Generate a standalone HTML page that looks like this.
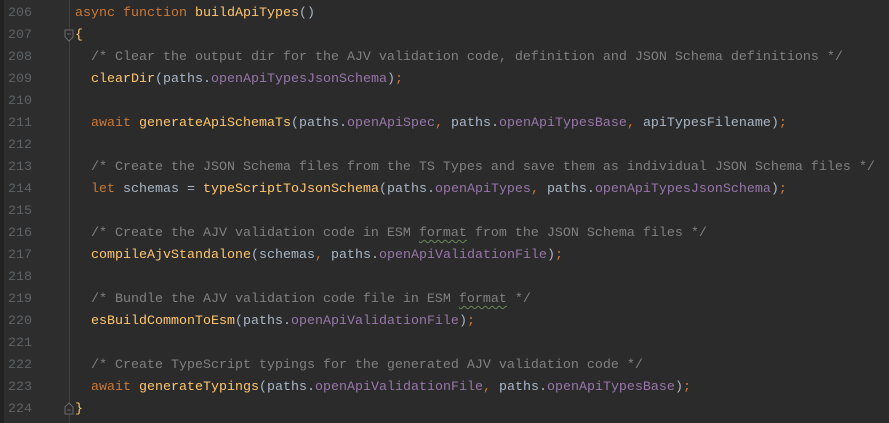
<!DOCTYPE html>
<html><head><style>
body{margin:0;width:889px;height:423px;overflow:hidden;background:#2b2b2b;font-family:"Liberation Mono",monospace;font-size:13.33px;}
.g{position:absolute;left:0;top:0;width:69px;height:423px;background:#2d2d2d;border-right:1px solid #404040;}
.g0{position:absolute;left:0;top:0;width:4px;height:423px;background:#232323;}
.l{position:absolute;left:0;height:22px;line-height:22px;white-space:pre;width:889px;}
.n{position:absolute;left:8px;width:30px;color:#5f6265;text-align:left;}
.c{position:absolute;left:75px;color:#a9b7c6;}
.k{color:#cc7832}.f{color:#ffc66d}.m{color:#808080}.p{color:#9876aa}
.w{text-decoration:underline wavy #6a8759;text-underline-offset:3px;text-decoration-thickness:1px}
</style></head><body>
<div class="g"></div><div class="g0"></div>
<svg style="position:absolute;left:64px;top:29px" width="11" height="13"><path d="M1 1H9V8L5 12L1 8Z" fill="#2b2b2b" stroke="#6a6a6a"/><path d="M3 5H7" stroke="#6a6a6a"/></svg>
<svg style="position:absolute;left:64px;top:402px" width="11" height="13"><path d="M1 12H9V5L5 1L1 5Z" fill="#2b2b2b" stroke="#6a6a6a"/><path d="M3 8H7" stroke="#6a6a6a"/></svg>
<div class="l" style="top:3px"><span class="n">206</span><span class="c"><span class="k">async function </span><span class="f">buildApiTypes</span>()</span></div>
<div class="l" style="top:25px"><span class="n">207</span><span class="c"><span class="f">{</span></span></div>
<div class="l" style="top:47px"><span class="n">208</span><span class="c"><span class="m">  /* Clear the output dir for the AJV validation code, definition and JSON Schema definitions */</span></span></div>
<div class="l" style="top:69px"><span class="n">209</span><span class="c">  <span class="f">clearDir</span>(paths.<span class="p">openApiTypesJsonSchema</span>)<span class="k">;</span></span></div>
<div class="l" style="top:91px"><span class="n">210</span></div>
<div class="l" style="top:113px"><span class="n">211</span><span class="c">  <span class="k">await </span><span class="f">generateApiSchemaTs</span>(paths.<span class="p">openApiSpec</span><span class="k">, </span>paths.<span class="p">openApiTypesBase</span><span class="k">, </span>apiTypesFilename)<span class="k">;</span></span></div>
<div class="l" style="top:135px"><span class="n">212</span></div>
<div class="l" style="top:157px"><span class="n">213</span><span class="c"><span class="m">  /* Create the JSON Schema files from the TS Types and save them as individual JSON Schema files */</span></span></div>
<div class="l" style="top:179px"><span class="n">214</span><span class="c">  <span class="k">let </span>schemas = <span class="f">typeScriptToJsonSchema</span>(paths.<span class="p">openApiTypes</span><span class="k">, </span>paths.<span class="p">openApiTypesJsonSchema</span>)<span class="k">;</span></span></div>
<div class="l" style="top:201px"><span class="n">215</span></div>
<div class="l" style="top:223px"><span class="n">216</span><span class="c"><span class="m">  /* Create the AJV validation code in ESM <span class="w">format</span> from the JSON Schema files */</span></span></div>
<div class="l" style="top:245px"><span class="n">217</span><span class="c">  <span class="f">compileAjvStandalone</span>(schemas<span class="k">, </span>paths.<span class="p">openApiValidationFile</span>)<span class="k">;</span></span></div>
<div class="l" style="top:267px"><span class="n">218</span></div>
<div class="l" style="top:289px"><span class="n">219</span><span class="c"><span class="m">  /* Bundle the AJV validation code file in ESM <span class="w">format</span> */</span></span></div>
<div class="l" style="top:311px"><span class="n">220</span><span class="c">  <span class="f">esBuildCommonToEsm</span>(paths.<span class="p">openApiValidationFile</span>)<span class="k">;</span></span></div>
<div class="l" style="top:333px"><span class="n">221</span></div>
<div class="l" style="top:355px"><span class="n">222</span><span class="c"><span class="m">  /* Create TypeScript typings for the generated AJV validation code */</span></span></div>
<div class="l" style="top:377px"><span class="n">223</span><span class="c">  <span class="k">await </span><span class="f">generateTypings</span>(paths.<span class="p">openApiValidationFile</span><span class="k">, </span>paths.<span class="p">openApiTypesBase</span>)<span class="k">;</span></span></div>
<div class="l" style="top:399px"><span class="n">224</span><span class="c"><span class="f">}</span></span></div>
</body></html>
